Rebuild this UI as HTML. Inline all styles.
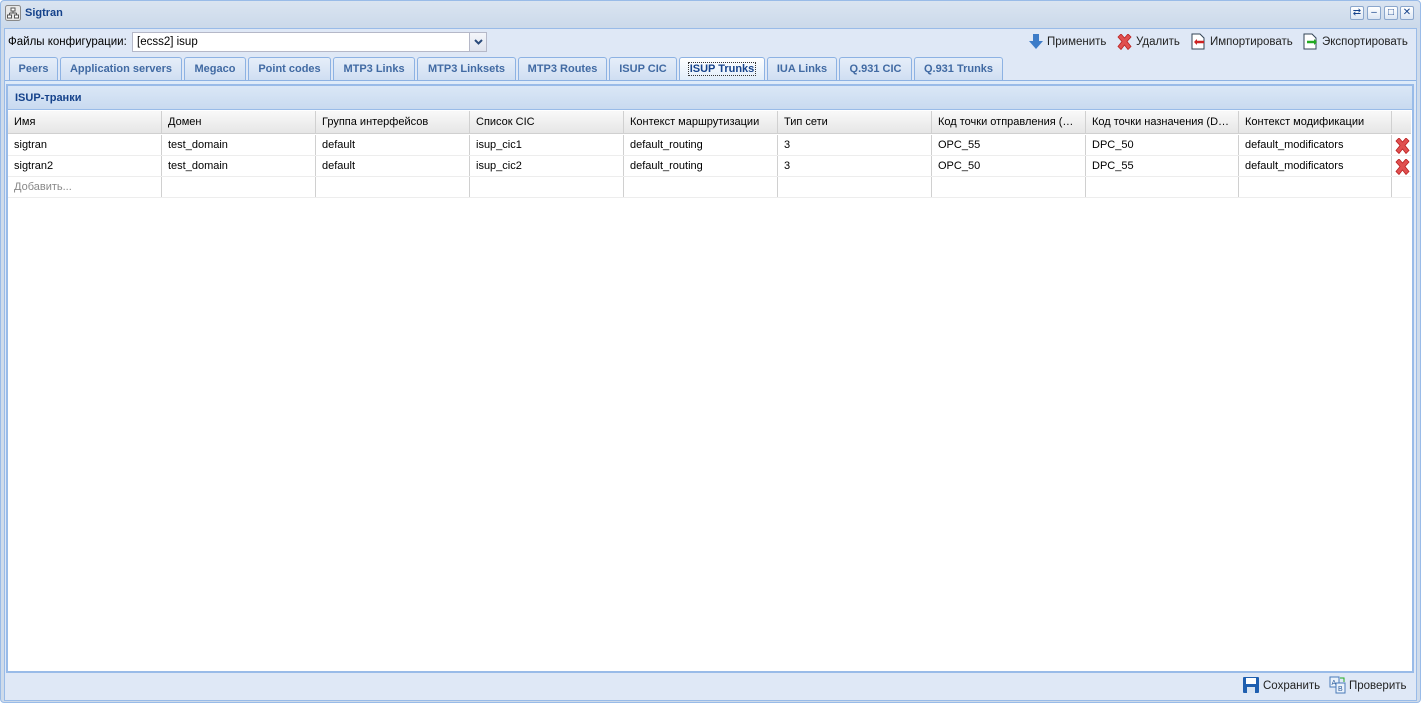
<!DOCTYPE html>
<html><head><meta charset="utf-8"><style>
*{box-sizing:border-box;margin:0;padding:0}
body{width:1421px;height:703px;overflow:hidden;background:#fff;font-family:"Liberation Sans",Arial,sans-serif;font-size:11px;color:#000;position:relative}
.abs{position:absolute}
.title{left:25px;top:7px;font-weight:bold;color:#15428b;font-size:11px}
.tb{top:6px;width:14px;height:14px;border:1px solid #8aa6cc;border-radius:2px;background:linear-gradient(#fff,#dbe6f4);color:#15428b;font-size:10px;line-height:12px;text-align:center}
.tab{position:absolute;top:56px;height:23px;border:1px solid #8db2e3;border-bottom:none;border-radius:3px 3px 0 0;background:linear-gradient(#e6eef9,#cfdef2);color:#416aa3;font-weight:bold;font-size:11px;text-align:center;line-height:22px}
.tab.act{background:linear-gradient(#fff,#deebf9);color:#15428b;height:25px}
.tab.act span{border:1px dotted #333;padding:0 1px}
.grid{left:8px;top:110px;width:1403px}
.row{position:absolute;left:0;width:1403px;height:21px;border-bottom:1px solid #ededed}
.c{position:absolute;top:0;height:100%;border-right:1px solid #d0d0d0;padding-left:6px;line-height:21px;white-space:nowrap;overflow:hidden}
.hdr .c{line-height:22px}
.btn{top:35px;color:#222;font-size:11.5px}
#w{position:absolute;left:0;top:1px;width:1421px;height:702px}
</style></head><body>
<div class="abs" style="left:0;top:0;width:1421px;height:703px;background:#cfdbea;border:1px solid #99bbe8;border-radius:4px"></div>
<div class="abs" style="left:1px;top:1px;width:1419px;height:27px;background:linear-gradient(#dae4f1,#cbd9ea);border-radius:4px 4px 0 0"></div>
<svg class="abs" style="left:5px;top:5px" width="16" height="16"><rect x=".5" y=".5" width="15" height="15" rx="2" fill="#e8e8e8" stroke="#888"/><rect x="6" y="3" width="4" height="3" fill="#fff" stroke="#555"/><rect x="2.5" y="10" width="4" height="3" fill="#fff" stroke="#555"/><rect x="9.5" y="10" width="4" height="3" fill="#fff" stroke="#555"/><path d="M8 6v2M4.5 8h7M4.5 8v2M11.5 8v2" stroke="#555" fill="none"/></svg>
<div class="abs title">Sigtran</div>
<div class="abs tb" style="left:1350px">⇄</div>
<div class="abs tb" style="left:1367px">–</div>
<div class="abs tb" style="left:1384px">□</div>
<div class="abs tb" style="left:1400px">✕</div>
<div id="w">
<div class="abs" style="left:4px;top:27px;width:1413px;height:673px;background:#dfe8f6;border:1px solid #99bbe8"></div>
<div class="abs" style="left:8px;top:35px;font-size:11.5px">Файлы конфигурации:</div>
<div class="abs" style="left:132px;top:31px;width:355px;height:20px;background:#fff;border:1px solid #b5b8c8"><span style="position:absolute;left:4px;top:3px;font-size:11.5px">[ecss2] isup</span><div style="position:absolute;right:0;top:0;width:17px;height:18px;border-left:1px solid #b5b8c8;background:linear-gradient(#f4f6fa,#dfe4ee)"><svg width="17" height="18"><path d="M5 7l3.5 3.5L12 7" stroke="#2a4a7a" stroke-width="2" fill="none"/></svg></div></div>
<svg class="abs" style="left:1029px;top:33px" width="14" height="16"><path d="M4 0h6v7h4l-7 8-7-8h4z" fill="#3d7cc8"/></svg>
<div class="abs btn" style="left:1047px">Применить</div>
<svg class="abs" style="left:1116px;top:33px" width="17" height="16"><path d="M2 3l3-3 3.5 4L12 0l3 3-4 4.5 4 5-3 3-3.5-4.5L5 15.5l-3-3 4-5z" fill="#e05050" stroke="#b22" stroke-width=".8"/></svg>
<div class="abs btn" style="left:1136px">Удалить</div>
<svg class="abs" style="left:1190px;top:32px" width="16" height="17"><path d="M2 1h8l4 4v11H2z" fill="#fff" stroke="#345"/><path d="M5 9h9" stroke="#c22" stroke-width="2.5"/><path d="M4 9l3-3v6z" fill="#c22"/></svg>
<div class="abs btn" style="left:1210px">Импортировать</div>
<svg class="abs" style="left:1302px;top:32px" width="16" height="17"><path d="M2 1h8l4 4v11H2z" fill="#fff" stroke="#345"/><path d="M5 9h7" stroke="#2a2" stroke-width="2.5"/><path d="M15 9l-3-3v6z" fill="#2a2"/></svg>
<div class="abs btn" style="left:1322px">Экспортировать</div>

<div class="tab" style="left:9px;width:49px">Peers</div>
<div class="tab" style="left:60px;width:122px">Application servers</div>
<div class="tab" style="left:184px;width:62px">Megaco</div>
<div class="tab" style="left:248px;width:83px">Point codes</div>
<div class="tab" style="left:333px;width:82px">MTP3 Links</div>
<div class="tab" style="left:417px;width:99px">MTP3 Linksets</div>
<div class="tab" style="left:518px;width:89px">MTP3 Routes</div>
<div class="tab" style="left:609px;width:68px">ISUP CIC</div>
<div class="tab act" style="left:679px;width:86px"><span>ISUP Trunks</span></div>
<div class="tab" style="left:767px;width:70px">IUA Links</div>
<div class="tab" style="left:839px;width:73px">Q.931 CIC</div>
<div class="tab" style="left:914px;width:89px">Q.931 Trunks</div>
<div class="abs" style="left:5px;top:79px;width:1411px;height:4px;background:#deebf9;border-top:1px solid #8db2e3"></div>

<div class="abs" style="left:6px;top:83px;width:1408px;height:589px;border:2px solid #99bbe8;background:#fff"></div>
<div class="abs" style="left:8px;top:85px;width:1404px;height:24px;background:linear-gradient(#dae7f6,#c9daf0);border-bottom:1px solid #99bbe8"></div>
<div class="abs" style="left:15px;top:91px;font-weight:bold;color:#15428b">ISUP-транки</div>

<div class="abs grid">
<div class="row hdr" style="top:0;height:23px;background:linear-gradient(#f9f9f9,#e6e6e6);border-bottom:1px solid #d0d0d0">
<div class="c" style="left:0;width:154px">Имя</div><div class="c" style="left:154px;width:154px">Домен</div><div class="c" style="left:308px;width:154px">Группа интерфейсов</div><div class="c" style="left:462px;width:154px">Список CIC</div><div class="c" style="left:616px;width:154px">Контекст маршрутизации</div><div class="c" style="left:770px;width:154px">Тип сети</div><div class="c" style="left:924px;width:154px">Код точки отправления (…</div><div class="c" style="left:1078px;width:153px">Код точки назначения (D…</div><div class="c" style="left:1231px;width:153px">Контекст модификации</div>
</div>
<div class="row" style="top:24px">
<div class="c" style="left:0;width:154px">sigtran</div><div class="c" style="left:154px;width:154px">test_domain</div><div class="c" style="left:308px;width:154px">default</div><div class="c" style="left:462px;width:154px">isup_cic1</div><div class="c" style="left:616px;width:154px">default_routing</div><div class="c" style="left:770px;width:154px">3</div><div class="c" style="left:924px;width:154px">OPC_55</div><div class="c" style="left:1078px;width:153px">DPC_50</div><div class="c" style="left:1231px;width:153px">default_modificators</div>
</div>
<div class="row" style="top:45px">
<div class="c" style="left:0;width:154px">sigtran2</div><div class="c" style="left:154px;width:154px">test_domain</div><div class="c" style="left:308px;width:154px">default</div><div class="c" style="left:462px;width:154px">isup_cic2</div><div class="c" style="left:616px;width:154px">default_routing</div><div class="c" style="left:770px;width:154px">3</div><div class="c" style="left:924px;width:154px">OPC_50</div><div class="c" style="left:1078px;width:153px">DPC_55</div><div class="c" style="left:1231px;width:153px">default_modificators</div>
</div>
<div class="row" style="top:66px">
<div class="c" style="left:0;width:154px;color:#888">Добавить...</div><div class="c" style="left:154px;width:154px"></div><div class="c" style="left:308px;width:154px"></div><div class="c" style="left:462px;width:154px"></div><div class="c" style="left:616px;width:154px"></div><div class="c" style="left:770px;width:154px"></div><div class="c" style="left:924px;width:154px"></div><div class="c" style="left:1078px;width:153px"></div><div class="c" style="left:1231px;width:153px"></div>
</div>
<svg class="abs" style="left:1386px;top:27px" width="17" height="16"><path d="M2 3l3-3 3.5 4L12 0l3 3-4 4.5 4 5-3 3-3.5-4.5L5 15.5l-3-3 4-5z" fill="#e05050" stroke="#b22" stroke-width=".8"/></svg>
<svg class="abs" style="left:1386px;top:48px" width="17" height="16"><path d="M2 3l3-3 3.5 4L12 0l3 3-4 4.5 4 5-3 3-3.5-4.5L5 15.5l-3-3 4-5z" fill="#e05050" stroke="#b22" stroke-width=".8"/></svg>
</div>

<svg class="abs" style="left:1243px;top:676px" width="16" height="16"><rect x="0" y="0" width="16" height="16" rx="1" fill="#1f5fb0"/><rect x="3" y="1" width="10" height="6" fill="#fff"/><rect x="4" y="10" width="8" height="6" fill="#d8e4f2"/></svg>
<div class="abs" style="left:1263px;top:679px;font-size:11.5px;color:#222">Сохранить</div>
<svg class="abs" style="left:1329px;top:675px" width="18" height="18"><rect x="1" y="1" width="9" height="10" fill="#eaf2fb" stroke="#4a7ab8"/><text x="2.5" y="9" font-size="7" fill="#2a5a9a" font-family="Liberation Sans">A</text><rect x="7" y="7" width="9" height="10" fill="#eaf2fb" stroke="#4a7ab8"/><text x="9" y="15" font-size="7" fill="#2a5a9a" font-family="Liberation Sans">B</text><path d="M11 2h4v4" stroke="#2a2" fill="none"/></svg>
<div class="abs" style="left:1349px;top:679px;font-size:11.5px;color:#222">Проверить</div>
</div>
</body></html>
